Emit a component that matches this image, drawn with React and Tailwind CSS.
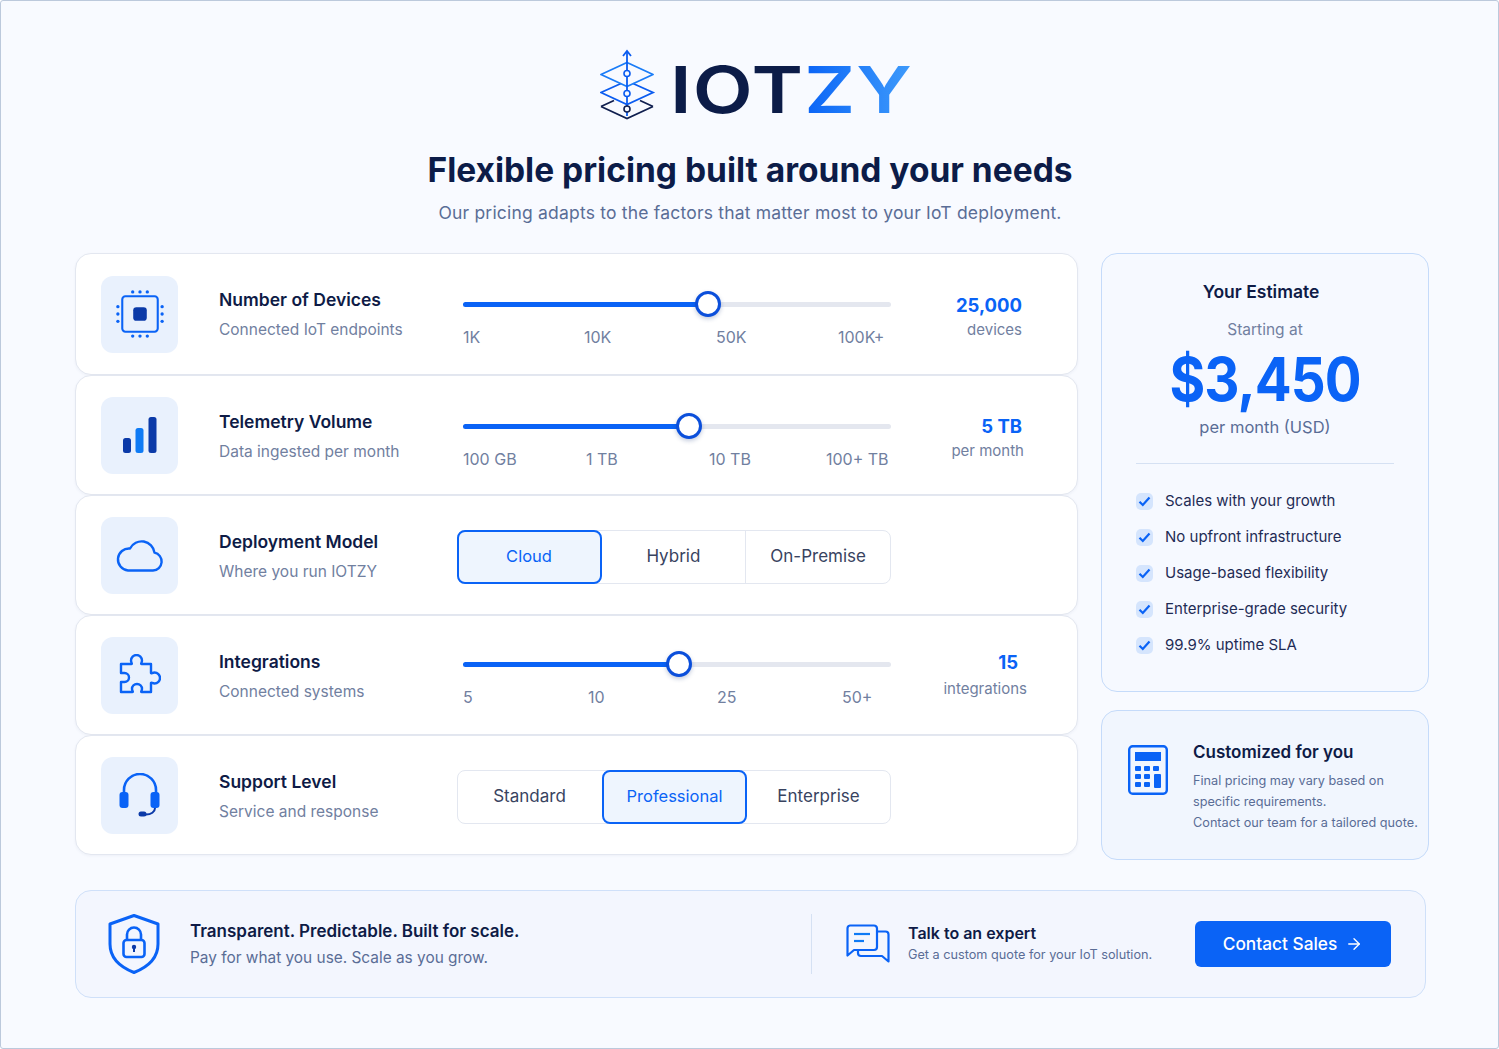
import { ArrowRight } from 'lucide-react'

const BLUE = '#0a63f6'

function ChipIcon() {
  const dots = [16, 23, 30]
  return (
    <svg width="48" height="48" viewBox="0 0 46 46" fill="none">
      <rect x="6" y="6" width="34" height="34" rx="3" stroke={BLUE} strokeWidth="2" />
      <rect x="16.500" y="16.500" width="13" height="13" rx="3" fill="#0b3aa8" />
      {dots.map(d => (
        <g key={d} fill={BLUE}>
          <circle cx={d} cy="1.800" r="1.600" />
          <circle cx={d} cy="44.200" r="1.600" />
          <circle cx="1.800" cy={d} r="1.600" />
          <circle cx="44.200" cy={d} r="1.600" />
        </g>
      ))}
    </svg>
  )
}

function BarsIcon() {
  return (
    <svg width="34" height="36" viewBox="0 0 34 36" fill="none">
      <rect x="0" y="21" width="8" height="15" rx="2.500" fill="#0b3aa8" />
      <rect x="12.500" y="11" width="8" height="25" rx="2.500" fill="#0f7bf5" />
      <rect x="25.500" y="0" width="8" height="36" rx="2.500" fill="#0b3aa8" />
    </svg>
  )
}

function CloudIcon() {
  return (
    <svg width="48" height="34" viewBox="0 0 48 34" fill="none">
      <path d="M12 32.500h25a9 9 0 0 0 1.500-17.800A13 13 0 0 0 14 10.500 11 11 0 0 0 12 32.500Z" stroke={BLUE} strokeWidth="2.400" strokeLinejoin="round" />
    </svg>
  )
}

function PuzzleIcon() {
  return (
    <svg width="42" height="42" viewBox="1 1 42 42" fill="none">
      <path
        d="M3 11h10.500c1 0-.5-1.500-.5-3.500a5.500 5.500 0 0 1 11 0c0 2-1.500 3.500-.5 3.500H33v9c0 1 1.500-.5 3.500-.5a5.500 5.500 0 0 1 0 11c-2 0-3.500-1.500-3.500-.5V39H23.500c-1 0 .5-1.500.5-3a5 5 0 0 0-10 0c0 1.500 1.500 3 .5 3H3V29h3.500a4.500 4.500 0 0 0 0-9H3V11Z"
        stroke={BLUE}
        strokeWidth="2.400"
        strokeLinejoin="round"
      />
    </svg>
  )
}

function HeadsetIcon() {
  return (
    <svg width="42" height="44" viewBox="0 0 42 44" fill="none">
      <path d="M5 20v-3a16 16 0 0 1 32 0v3" stroke={BLUE} strokeWidth="2.600" />
      <rect x="0.500" y="19" width="9" height="16" rx="3" fill={BLUE} />
      <rect x="31.500" y="19" width="9" height="16" rx="3" fill={BLUE} />
      <path d="M36 35c0 4-4 6.500-9 6.500h-6" stroke="#0b3aa8" strokeWidth="2" />
      <rect x="19.500" y="38.500" width="8" height="5" rx="2.500" fill="#0b3aa8" />
    </svg>
  )
}

function CheckTile() {
  return (
    <span className="flex h-[17px] w-[17px] shrink-0 items-center justify-center rounded-[5px] bg-[#d5e5fd]">
      <svg width="13" height="11" viewBox="0 0 13 11" fill="none">
        <path d="M1.500 5.800 4.800 9 11.500 1.500" stroke={BLUE} strokeWidth="2.200" />
      </svg>
    </span>
  )
}

function CalculatorIcon() {
  const keys = [[7, 21], [16, 21], [25, 21], [7, 29], [16, 29], [7, 37], [16, 37]]
  return (
    <svg width="40" height="50" viewBox="0 0 40 50" fill="none">
      <rect x="1.200" y="1.200" width="37.600" height="47.600" rx="3.500" stroke={BLUE} strokeWidth="2.400" />
      <rect x="7" y="7" width="26" height="9" fill={BLUE} />
      {keys.map(([x, y]) => (
        <rect key={`${x}-${y}`} x={x} y={y} width="6" height="5" rx="1" fill={BLUE} />
      ))}
      <rect x="26" y="29" width="7" height="14" rx="1" fill={BLUE} />
    </svg>
  )
}

function ShieldIcon() {
  return (
    <svg width="52" height="60" viewBox="0 0 52 60" fill="none">
      <path d="M26 1.500 50 10v20c0 14-10 23-24 28.500C12 53 2 44 2 30V10L26 1.500Z" stroke={BLUE} strokeWidth="3" strokeLinejoin="round" />
      <rect x="15.500" y="26" width="21" height="17" rx="3" stroke={BLUE} strokeWidth="2.600" />
      <path d="M19 26v-5.500a7 7 0 0 1 14 0V26" stroke={BLUE} strokeWidth="2.600" />
      <circle cx="26" cy="33" r="2.200" fill="#0b3aa8" />
      <rect x="25" y="33" width="2" height="5" fill="#0b3aa8" />
    </svg>
  )
}

function ChatIcon() {
  return (
    <svg width="44" height="40" viewBox="0 0 44 40" fill="none">
      <path d="M4 1.500h24a3 3 0 0 1 3 3V23a3 3 0 0 1-3 3H8l-6.500 5.500V4.500a3 3 0 0 1 2.500-3Z" fill="#f4f7fe" stroke={BLUE} strokeWidth="2.200" strokeLinejoin="round" />
      <path d="M31 7.500h8.500a3 3 0 0 1 3 3v27L36 32H15a3 3 0 0 1-3-3v-3" stroke={BLUE} strokeWidth="2.200" strokeLinejoin="round" />
      <path d="M8 10h16" stroke="#0f7bf5" strokeWidth="2.200" />
      <path d="M8 17h10" stroke="#0f7bf5" strokeWidth="2.200" />
    </svg>
  )
}

function Logo() {
  return (
    <svg width="56" height="72" viewBox="0 0 56 72" fill="none">
      <path d="M1 57.500 27 69.500 53 57.500" stroke="#101f4f" strokeWidth="1.800" />
      <path d="M1 57.500 14 51.500M53 57.500 40 51.500" stroke="#101f4f" strokeWidth="1.800" />
      <path d="M21 34.500 1 43.500 27 55.500 53 43.500 33 34.500" stroke="#0b5cf0" strokeWidth="1.800" />
      <path d="M27 13.500 1 25.500 27 37.500 53 25.500Z" stroke="#1a7cf7" strokeWidth="1.800" strokeLinejoin="round" />
      <path d="M27 2v65" stroke="#0b5cf0" strokeWidth="1.800" />
      <path d="M23 7 27 2 31 7" stroke="#0b5cf0" strokeWidth="1.800" />
      <circle cx="27" cy="24.500" r="3" fill="#f8faff" stroke="#0b5cf0" strokeWidth="1.600" />
      <circle cx="27" cy="44.500" r="3" fill="#f8faff" stroke="#0b5cf0" strokeWidth="1.600" />
      <circle cx="27" cy="60" r="3" fill="#f8faff" stroke="#101f4f" strokeWidth="1.600" />
    </svg>
  )
}

function IconTile({ children }) {
  return (
    <div className="flex h-[77px] w-[77px] shrink-0 items-center justify-center rounded-xl bg-[#e9f1fd]">
      {children}
    </div>
  )
}

function RowText({ title, sub, className = 'pt-[2px]' }) {
  return (
    <div className={`ml-[41px] w-[238px] shrink-0 ${className}`}>
      <p className="-mt-[1px] text-[17.5px] leading-6 font-semibold text-[#0e1b46]">{title}</p>
      <p className="mt-[8px] text-[15.5px] leading-5 text-[#71809f]">{sub}</p>
    </div>
  )
}

function Slider({ pos, labels, cols, className }) {
  return (
    <div className={`ml-[6px] w-[428px] shrink-0 self-start ${className}`}>
      <div className="relative flex h-[26px] items-center">
        <div className="h-[5px] w-full rounded-full bg-[#e4e7ef]" />
        <div className="absolute left-0 h-[5px] rounded-full bg-[#0a63f6]" style={{ width: pos }} />
        <div className="absolute h-[26px] w-[26px] -translate-x-1/2 rounded-full border-[3px] border-[#0b4fdb] bg-white shadow-[0_2px_4px_rgba(20,50,120,0.25)]" style={{ left: pos }} />
      </div>
      <div className={`mt-[10px] grid text-[16px] leading-5 text-[#71809f] ${cols}`}>
        {labels.map(l => (
          <span key={l}>{l}</span>
        ))}
      </div>
    </div>
  )
}

function Segments({ options, active }) {
  return (
    <div className="mt-[4px] flex h-[54px] w-[434px] shrink-0 rounded-lg border-[1.5px] border-[#e3e7f0] bg-white">
      {options.map((o, i) => (
        <div
          key={o}
          className={
            o === active
              ? `-my-[1.5px] flex h-[54px] w-[145px] shrink-0 items-center justify-center rounded-lg border-2 border-[#0a63f6] bg-[#eef5fe] text-[16.5px] text-[#0a63f6] ${i === 0 ? '-ml-[1.5px]' : 'ml-px'}`
              : `flex flex-1 items-center justify-center text-[17px] text-[#38435f] ${i === 2 && active === 'Cloud' ? 'border-l-[1.5px] border-[#e3e7f0]' : ''}`
          }
        >
          {o}
        </div>
      ))}
    </div>
  )
}

function Value({ value, unit, className, valueClass = '', unitClass = '' }) {
  return (
    <div className={`w-[131px] shrink-0 self-start text-right ${className}`}>
      <p className={`text-[18.5px] leading-7 font-bold text-[#0a63f6] ${valueClass}`}>{value}</p>
      <p className={`text-[15px] leading-5 text-[#71809f] ${unitClass}`}>{unit}</p>
    </div>
  )
}

function Row({ className, children }) {
  return (
    <div className={`flex items-center rounded-2xl border-[1.5px] border-[#e3e7f0] bg-white pl-[25px] shadow-[0_1px_3px_rgba(30,60,120,0.05)] ${className}`}>
      {children}
    </div>
  )
}

export default function App() {
  const perks = [
    'Scales with your growth',
    'No upfront infrastructure',
    'Usage-based flexibility',
    'Enterprise-grade security',
    '99.9% uptime SLA',
  ]

  return (
    <div className="h-[1049px] w-[1499px] overflow-hidden rounded-[3px] border border-[#bcc9dc] bg-[#f8faff] pl-[74px] font-[Inter,sans-serif]">
      <div className="flex w-[1350px] flex-col items-center pt-[48px]">
        <div className="ml-[12px] flex h-[72px] items-center">
          <Logo />
          <div className="mt-[8px] ml-[14px] w-[242px]">
            <span className="inline-block origin-left scale-x-[1.2] text-[65px] leading-none font-semibold tracking-[1px] whitespace-nowrap text-[#0c1c48]">
              IOT
              <span className="bg-gradient-to-r from-[#0a63f6] to-[#3f9bfb] bg-clip-text text-transparent">ZY</span>
            </span>
          </div>
        </div>
        <h1 className="mt-[27px] text-[33.5px] leading-[44px] font-bold text-[#0c1c48]">Flexible pricing built around your needs</h1>
        <p className="mt-[9px] text-[17.5px] leading-6 tracking-[0.2px] text-[#5a6d96]">Our pricing adapts to the factors that matter most to your IoT deployment.</p>
      </div>

      <div className="mt-[28px] flex w-[1354px] gap-[23px]">
        <div className="flex w-[1003px] shrink-0 flex-col">
          <Row className="h-[122px]">
            <IconTile><ChipIcon /></IconTile>
            <RowText title="Number of Devices" sub="Connected IoT endpoints" className="" />
            <Slider pos="245px" labels={['1K', '10K', '50K', '100K+']} cols="grid-cols-[121px_132px_122px_1fr]" className="mt-[37px]" />
            <Value value="25,000" unit="devices" className="mt-[37px]" unitClass="mt-px" />
          </Row>
          <Row className="h-[120px]">
            <IconTile><BarsIcon /></IconTile>
            <RowText title="Telemetry Volume" sub="Data ingested per month" />
            <Slider pos="226px" labels={['100 GB', '1 TB', '10 TB', '100+ TB']} cols="grid-cols-[123px_123px_117px_1fr]" className="mt-[37px]" />
            <Value value="5 TB" unit="per month" className="mt-[36px]" unitClass="mt-px -mr-[2px]" />
          </Row>
          <Row className="h-[120px]">
            <IconTile><CloudIcon /></IconTile>
            <RowText title="Deployment Model" sub="Where you run IOTZY" />
            <Segments options={['Cloud', 'Hybrid', 'On-Premise']} active="Cloud" />
          </Row>
          <Row className="h-[120px]">
            <IconTile><PuzzleIcon /></IconTile>
            <RowText title="Integrations" sub="Connected systems" />
            <Slider pos="216px" labels={['5', '10', '25', '50+']} cols="grid-cols-[125px_129px_125px_1fr]" className="mt-[35px]" />
            <Value value="15" unit="integrations" className="mt-[32px]" valueClass="pr-[4px]" unitClass="mt-[3px] -mr-[5px]" />
          </Row>
          <Row className="h-[120px]">
            <IconTile><HeadsetIcon /></IconTile>
            <RowText title="Support Level" sub="Service and response" />
            <Segments options={['Standard', 'Professional', 'Enterprise']} active="Professional" />
          </Row>
        </div>

        <div className="flex w-[328px] shrink-0 flex-col gap-[18px]">
          <div className="flex h-[439px] flex-col rounded-2xl border-[1.5px] border-[#c5dbfa] bg-[#f6f9ff] px-[34px] pt-[26px]">
            <p className="pr-[8px] text-center text-[17.5px] leading-6 font-semibold text-[#0e1b46]">Your Estimate</p>
            <p className="mt-[16px] text-center text-[15.5px] leading-5 text-[#71809f]">Starting at</p>
            <p className="mt-[8px] text-center">
              <span className="inline-block scale-x-[0.91] text-[60px] leading-[62px] font-bold tracking-[-1px] text-[#0a63f6]">$3,450</span>
            </p>
            <p className="mt-[5px] text-center text-[16.5px] leading-6 text-[#5a6d96]">per month (USD)</p>
            <div className="mt-[24px] h-px bg-[#d5e1f3]" />
            <ul className="mt-[27px] flex flex-col gap-[16px]">
              {perks.map(p => (
                <li key={p} className="flex h-5 items-center gap-[12px] text-[15px] text-[#1f2c55]">
                  <CheckTile />
                  {p}
                </li>
              ))}
            </ul>
          </div>
          <div className="flex h-[150px] rounded-2xl border-[1.5px] border-[#c5dbfa] bg-[#f1f6fe] pt-[33px] pl-[26px]">
            <div className="mt-[1px] shrink-0"><CalculatorIcon /></div>
            <div className="ml-[25px]">
              <p className="-mt-[4px] text-[17px] leading-6 font-semibold text-[#0e1b46]">Customized for you</p>
              <p className="mt-[6px] text-[12.7px] leading-[21px] whitespace-nowrap text-[#5a6d96]">
                Final pricing may vary based on<br />specific requirements.<br />Contact our team for a tailored quote.
              </p>
            </div>
          </div>
        </div>
      </div>

      <div className="mt-[30px] flex h-[108px] w-[1351px] items-center rounded-2xl border-[1.5px] border-[#cfe0f9] bg-[#f3f6fe] pl-[32px]">
        <ShieldIcon />
        <div className="ml-[30px] w-[621px] shrink-0">
          <p className="-mt-[1px] text-[17px] leading-6 font-semibold text-[#0e1b46]">Transparent. Predictable. Built for scale.</p>
          <p className="mt-[5px] text-[15.4px] leading-5 text-[#5a6d96]">Pay for what you use. Scale as you grow.</p>
        </div>
        <div className="h-[60px] w-px shrink-0 bg-[#d5e1f3]" />
        <div className="ml-[34px] shrink-0"><ChatIcon /></div>
        <div className="ml-[18px] -mt-[4px] w-[287px] shrink-0">
          <p className="mb-px text-[16px] leading-6 font-semibold text-[#0e1b46]">Talk to an expert</p>
          <p className="text-[12.7px] leading-[18px] text-[#5a6d96]">Get a custom quote for your IoT solution.</p>
        </div>
        <button className="flex h-[46px] w-[196px] shrink-0 items-center justify-center gap-[8px] rounded-md bg-[#0a63f6] text-[17.3px] font-medium text-white">
          Contact Sales
          <ArrowRight size={18} strokeWidth={1.8} />
        </button>
      </div>
    </div>
  )
}
